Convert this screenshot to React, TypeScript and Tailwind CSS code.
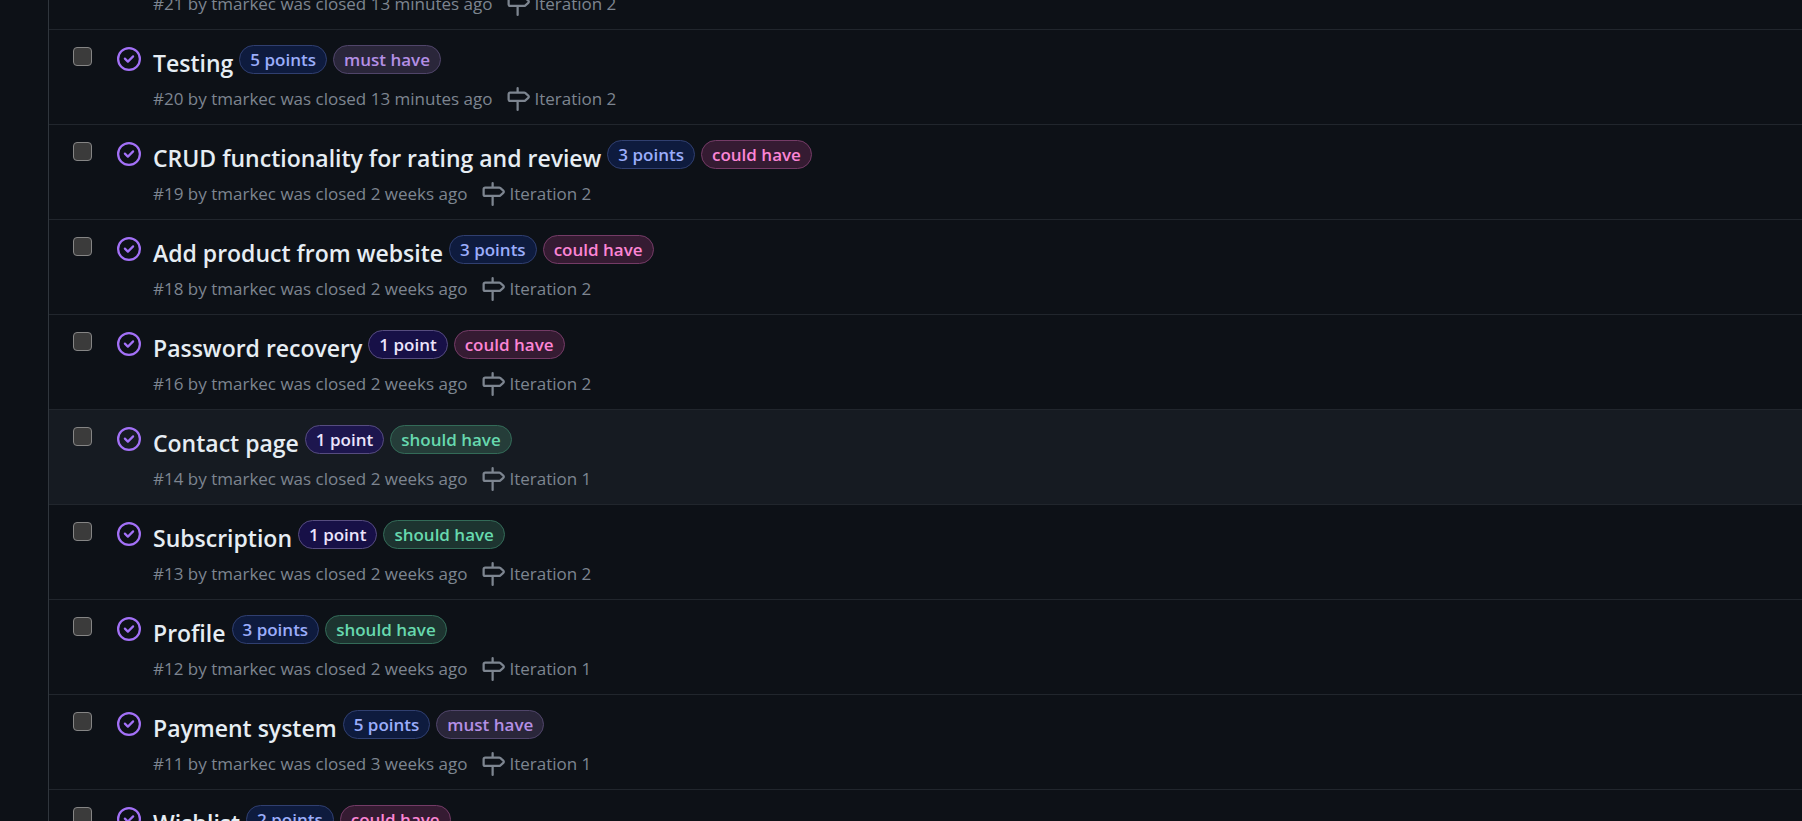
type Tone = "blue" | "violet" | "pink" | "purple" | "green";
type IssueLabel = { text: string; tone: Tone };
type Issue = {
  id: number;
  title: string;
  closed: string;
  milestone: string;
  labels: IssueLabel[];
  active?: boolean;
};

const tones: Record<Tone, string> = {
  blue: "bg-[#133ab4]/25 border-[#303f70] text-[#9badfb]",
  violet: "bg-[#2c0fa0]/35 border-[#564c80] text-[#ebe4fc]",
  pink: "bg-[#f04bb3]/18 border-[#743b66] text-[#fc85d5]",
  purple: "bg-[#b088e0]/18 border-[#50456a] text-[#b48fe5]",
  green: "bg-[#67d8a9]/18 border-[#336b58] text-[#67d8ae]",
};

const points = (n: number): IssueLabel => ({
  text: n === 1 ? "1 point" : `${n} points`,
  tone: n === 1 ? "violet" : "blue",
});
const must: IssueLabel = { text: "must have", tone: "purple" };
const could: IssueLabel = { text: "could have", tone: "pink" };
const should: IssueLabel = { text: "should have", tone: "green" };

const issues: Issue[] = [
  { id: 20, title: "Testing", closed: "13 minutes ago", milestone: "Iteration 2", labels: [points(5), must] },
  { id: 19, title: "CRUD functionality for rating and review", closed: "2 weeks ago", milestone: "Iteration 2", labels: [points(3), could] },
  { id: 18, title: "Add product from website", closed: "2 weeks ago", milestone: "Iteration 2", labels: [points(3), could] },
  { id: 16, title: "Password recovery", closed: "2 weeks ago", milestone: "Iteration 2", labels: [points(1), could] },
  { id: 14, title: "Contact page", closed: "2 weeks ago", milestone: "Iteration 1", labels: [points(1), should], active: true },
  { id: 13, title: "Subscription", closed: "2 weeks ago", milestone: "Iteration 2", labels: [points(1), should] },
  { id: 12, title: "Profile", closed: "2 weeks ago", milestone: "Iteration 1", labels: [points(3), should] },
  { id: 11, title: "Payment system", closed: "3 weeks ago", milestone: "Iteration 1", labels: [points(5), must] },
  { id: 10, title: "Wishlist", closed: "3 weeks ago", milestone: "Iteration 1", labels: [points(2), could] },
];

function ClosedIcon() {
  return (
    <svg viewBox="0 0 16 16" className="size-6 shrink-0 fill-[#a371f7]" aria-hidden="true">
      <path d="M11.28 6.78a.75.75 0 0 0-1.06-1.06L7.25 8.69 5.78 7.22a.75.75 0 0 0-1.06 1.06l2 2a.75.75 0 0 0 1.06 0l3.5-3.5Z" />
      <path d="M16 8A8 8 0 1 1 0 8a8 8 0 0 1 16 0Zm-1.5 0a6.5 6.5 0 1 0-13 0 6.5 6.5 0 0 0 13 0Z" />
    </svg>
  );
}

function MilestoneIcon() {
  return (
    <svg viewBox="0 0 16 16" className="size-6 shrink-0 fill-current" aria-hidden="true">
      <path d="M7.75 0a.75.75 0 0 1 .75.75V3h3.634c.414 0 .814.147 1.13.414l2.07 1.75a1.75 1.75 0 0 1 0 2.672l-2.07 1.75a1.75 1.75 0 0 1-1.13.414H8.5v5.25a.75.75 0 0 1-1.5 0V10H2.75A1.75 1.75 0 0 1 1 8.25v-3.5C1 3.784 1.784 3 2.75 3H7V.75A.75.75 0 0 1 7.75 0Zm4.384 8.5a.25.25 0 0 0 .161-.06l2.07-1.75a.248.248 0 0 0 0-.38l-2.07-1.75a.25.25 0 0 0-.161-.06H2.75a.25.25 0 0 0-.25.25v3.5c0 .138.112.25.25.25h9.384Z" />
    </svg>
  );
}

function Meta({ id, closed, milestone }: Pick<Issue, "id" | "closed" | "milestone">) {
  return (
    <div className="flex items-center gap-[14px] text-[17px] leading-6 text-[#7d8590]">
      <span>
        #{id} by <a href="#author">tmarkec</a> was closed {closed}
      </span>
      <a href="#milestone" className="flex items-center gap-1">
        <MilestoneIcon />
        {milestone}
      </a>
    </div>
  );
}

function Row({ issue }: { issue: Issue }) {
  return (
    <li
      className={`flex h-[95px] items-start border-t border-[#21262d] pl-6 ${issue.active ? "bg-[#161b22]" : "hover:bg-[#161b22]"}`}
    >
      <input
        type="checkbox"
        aria-label={`Select ${issue.title}`}
        className="mt-[17px] size-[19px] shrink-0 appearance-none rounded-[4px] border border-[#858585] bg-[#3b3b3b]"
      />
      <div className="mt-[17px] ml-[25px]">
        <ClosedIcon />
      </div>
      <div className="ml-3 flex flex-col gap-2 pt-[15px] whitespace-nowrap">
        <div className="flex items-start gap-[6px]">
          <a href={`#issue-${issue.id}`} className="pt-[2px] text-[23px] leading-8 font-semibold text-[#e6edf3]">
            {issue.title}
          </a>
          {issue.labels.map((label) => (
            <a
              key={label.text}
              href="#label"
              className={`flex h-[29px] items-center rounded-full border px-[10px] text-[17px] font-semibold ${tones[label.tone]}`}
            >
              {label.text}
            </a>
          ))}
        </div>
        <Meta id={issue.id} closed={issue.closed} milestone={issue.milestone} />
      </div>
    </li>
  );
}

export default function App() {
  return (
    <main className="h-screen overflow-hidden bg-[#0d1117] pl-12 font-['Open_Sans','Noto_Sans',sans-serif]">
      <ul className="border-l border-[#30363d]">
        <li className="-mt-2 flex h-[37px] items-start pl-[104px] whitespace-nowrap">
          <Meta id={21} closed="13 minutes ago" milestone="Iteration 2" />
        </li>
        {issues.map((issue) => (
          <Row key={issue.id} issue={issue} />
        ))}
      </ul>
    </main>
  );
}
